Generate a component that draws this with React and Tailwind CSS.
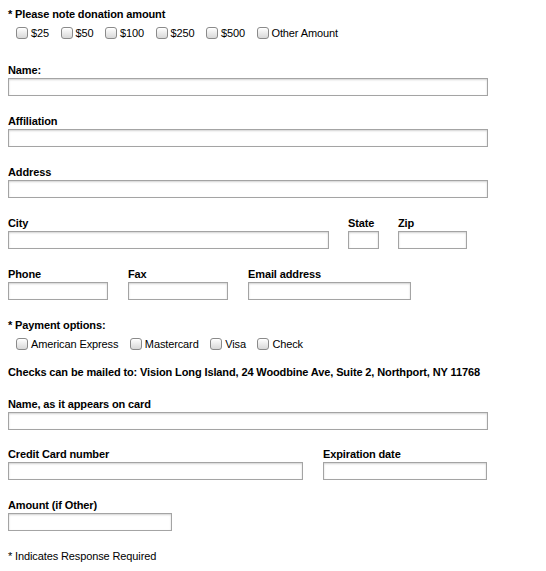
import React from "react";

const Box = () => (
  <span className="inline-block w-[12px] h-[12px] rounded-[3px] border border-[#8a8a8a] bg-gradient-to-b from-[#ffffff] to-[#d8d8d8] shadow-[inset_0_1px_0_rgba(255,255,255,0.9)] shrink-0" />
);

const Check = ({ label }) => (
  <label className="flex items-center mr-[11.5px]">
    <Box />
    <span className="ml-[3px]">{label}</span>
  </label>
);

const Input = ({ w }) => (
  <div
    className={`${w} h-[18px] border border-[#a4a4a4] bg-white shadow-[inset_0_1px_2px_rgba(0,0,0,0.18)]`}
  />
);

const Label = ({ children }) => (
  <div className="font-bold leading-[15px] h-[15px] whitespace-nowrap">{children}</div>
);

const Field = ({ label, w }) => (
  <div className="flex flex-col">
    <Label>{label}</Label>
    <Input w={w} />
  </div>
);

export default function App() {
  return (
    <div
      className="bg-white text-black text-[11px] tracking-[-0.12px] pl-[8px] pt-[7px] w-[546px] h-[571px]"
      style={{ fontFamily: '"Liberation Sans", Arial, sans-serif' }}
    >
      <Label>* Please note donation amount</Label>
      <div className="flex items-center h-[16px] mt-[3px] pl-[8px] leading-[16px]">
        <Check label="$25" />
        <Check label="$50" />
        <Check label="$100" />
        <Check label="$250" />
        <Check label="$500" />
        <Check label="Other Amount" />
      </div>

      <div className="mt-[22px] flex flex-col gap-[18px]">
        <Field label="Name:" w="w-[480px]" />
        <Field label="Affiliation" w="w-[480px]" />
        <Field label="Address" w="w-[480px]" />
        <div className="flex gap-[19px]">
          <Field label="City" w="w-[321px]" />
          <Field label="State" w="w-[31px]" />
          <Field label="Zip" w="w-[69px]" />
        </div>
        <div className="flex gap-[20px]">
          <Field label="Phone" w="w-[100px]" />
          <Field label="Fax" w="w-[100px]" />
          <Field label="Email address" w="w-[163px]" />
        </div>
      </div>

      <div className="mt-[18px]">
        <Label>* Payment options:</Label>
        <div className="flex items-center h-[16px] mt-[3px] pl-[8px] leading-[16px]">
          <Check label="American Express" />
          <Check label="Mastercard" />
          <Check label="Visa" />
          <Check label="Check" />
        </div>
        <div className="mt-[13px]">
          <Label>
            Checks can be mailed to: Vision Long Island, 24 Woodbine Ave, Suite 2, Northport, NY 11768
          </Label>
        </div>
      </div>

      <div className="mt-[17px] flex flex-col">
        <Field label="Name, as it appears on card" w="w-[480px]" />
        <div className="flex gap-[20px] mt-[17px]">
          <Field label="Credit Card number" w="w-[295px]" />
          <Field label="Expiration date" w="w-[164px]" />
        </div>
        <div className="mt-[18px]">
          <Field label="Amount (if Other)" w="w-[164px]" />
        </div>
      </div>

      <div className="mt-[18px] leading-[15px]">* Indicates Response Required</div>
    </div>
  );
}
